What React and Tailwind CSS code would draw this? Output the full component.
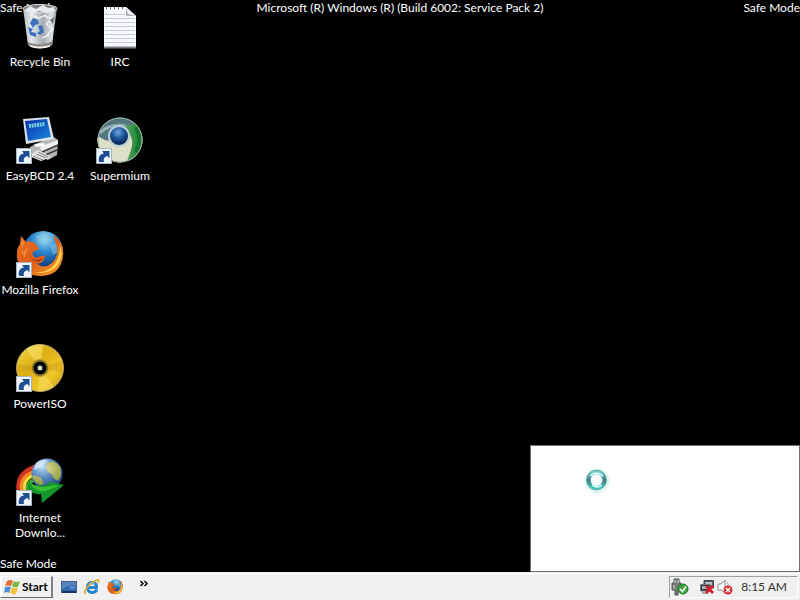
import React from "react";

function ShortcutArrow() {
  return (
    <g>
      <rect x="0.5" y="32.5" width="15" height="15" fill="#f1f5fb" stroke="#a9b4c2" />
      <path d="M3 46C2 41 4 38 8 37.500L6 35H13.500V42.500L11.300 40C8 41 7 43 8 46Z" fill="#1f4f93" />
    </g>
  );
}

function RecycleBin() {
  return (
    <svg viewBox="0 -2 48 48" className="size-12 overflow-visible" aria-hidden="true">
      <defs>
        <linearGradient id="bin" x1="0" x2="1">
          <stop offset="0" stopColor="#b9bec2" />
          <stop offset=".25" stopColor="#e3e7ea" />
          <stop offset=".6" stopColor="#a4abb0" />
          <stop offset=".85" stopColor="#dfe3e6" />
          <stop offset="1" stopColor="#858c91" />
        </linearGradient>
      </defs>
      <path d="M7 4L12 41Q23 48 36 41L41 4Z" fill="url(#bin)" />
      <path d="M12 38Q24 43 37 37L36 41Q24 48 12 41Z" fill="#8f8c84" />
      <path d="M14 42Q24 45 34 42" fill="none" stroke="#f4f4ee" strokeWidth="1.500" />
      <ellipse cx="24" cy="4.500" rx="17" ry="4" fill="#777d80" stroke="#d9dcde" />
      <path d="M9 6L14 2L20 5L27 1L32 4L38 3L39 7L31 9L23 7L16 10Z" fill="#e8eaec" />
      <path d="M29 12L36 15L30 20L37 25L31 31M15 11L23 14L30 11M26 34L33 31" fill="none" stroke="#fafafa" strokeWidth="1.500" opacity=".8" />
      <path d="M34 16L38 13L37 20Z" fill="#63696d" />
      <path d="M14 19L17 14L22 16L23 20L19 21L17 24ZM22 22L26 21L28 28L24 31L21 29L24 27ZM12 23L17 25L15 28L20 29L20 33L14 31Z" fill="#3a70c0" />
    </svg>
  );
}

function Notepad() {
  const lines = [11, 15, 19, 23, 27, 31, 35, 39];
  return (
    <svg viewBox="0 -1 48 48" className="size-12 overflow-visible" aria-hidden="true">
      <path d="M8 4H30L40 13V45H8Z" fill="#f7f8fb" />
      {lines.map((y) => (
        <path key={y} d={`M9 ${y}.5H${y < 14 ? 29 : 39}`} stroke="#c6cbe0" />
      ))}
      <path d="M30 4V13H40Z" fill="#aeb3bb" />
      <path d="M30 4L40 13L32 11Z" fill="#eef0f3" />
      <path d="M10 5H30" stroke="#666b72" strokeWidth="2.500" strokeDasharray="1 3" />
      <path d="M8 44.500H40" stroke="#777c84" strokeWidth="2" />
    </svg>
  );
}

function EasyBcd() {
  return (
    <svg viewBox="0 0 48 48" className="size-12 overflow-visible" aria-hidden="true">
      <defs>
        <linearGradient id="screen" x1="0" y1="0" x2="1" y2="1">
          <stop offset="0" stopColor="#0b2eaa" />
          <stop offset="1" stopColor="#1b8be0" />
        </linearGradient>
      </defs>
      <path d="M14 31L36 20L42 24L41 39L32 44L14 38Z" fill="#b7b9b7" />
      <path d="M24 31L42 24V29L26 36Z" fill="#efefec" />
      <path d="M26 36L42 29M27 40L41 34" stroke="#3b3d3d" strokeWidth="1.500" />
      <path d="M13 40L22 34L35 41L25 45Z" fill="#e9e9e6" />
      <path d="M17 40L27 44M20 38L30 42M22 36L32 41" stroke="#777" strokeWidth="1" />
      <path d="M7 3L33 1L38 23L10 28Z" fill="#dce2ea" />
      <path d="M9 5L31 3L35 21L12 25Z" fill="url(#screen)" />
      <path d="M13 10L29 8" stroke="#77cddd" strokeWidth="4" strokeDasharray="2 .7" />
      <path d="M18 28L28 27L29 30L20 31Z" fill="#fff" />
      <ShortcutArrow />
    </svg>
  );
}

function Supermium() {
  return (
    <svg viewBox="0 0 48 48" className="size-12 overflow-visible" aria-hidden="true">
      <defs>
        <radialGradient id="core" cx=".45" cy=".3" r=".7">
          <stop offset="0" stopColor="#6da5dc" />
          <stop offset=".5" stopColor="#1d559c" />
          <stop offset="1" stopColor="#061c4b" />
        </radialGradient>
        <linearGradient id="green" x1="0" x2="1">
          <stop offset="0" stopColor="#66a771" />
          <stop offset=".65" stopColor="#218b36" />
          <stop offset="1" stopColor="#6fb875" />
        </linearGradient>
        <clipPath id="ball">
          <circle cx="24" cy="24" r="22.500" />
        </clipPath>
      </defs>
      <g clipPath="url(#ball)">
        <path d="M0 0H48V48H0Z" fill="#dfe0c9" />
        <path d="M0 0H48V16H24Q14 16 12 26L0 19Z" fill="#55777f" />
        <path d="M4 17Q14 7 30 10" fill="none" stroke="#93b1b6" strokeWidth="3" />
        <path d="M28 9Q38 11 42 3L48 8V48H30L35 34Q39 22 30 14Z" fill="url(#green)" />
        <path d="M40 11Q47 23 40 36" fill="none" stroke="#14752c" strokeWidth="4" />
        <path d="M0 21Q7 24 13 25Q17 36 31 33L25 48H0Z" fill="#dfe0c9" />
      </g>
      <circle cx="24" cy="24" r="22" fill="none" stroke="#99b0a5" />
      <circle cx="23" cy="20" r="11" fill="#b9cfd8" />
      <circle cx="23" cy="20" r="9" fill="url(#core)" />
      <ShortcutArrow />
    </svg>
  );
}

function FirefoxArt({ id }) {
  return (
    <g>
      <defs>
        <radialGradient id={`${id}-globe`} cx=".55" cy=".2" r=".8">
          <stop offset="0" stopColor="#a4e0f5" />
          <stop offset=".4" stopColor="#2c89ce" />
          <stop offset="1" stopColor="#0a2668" />
        </radialGradient>
        <linearGradient id={`${id}-fox`} x1="0" y1="0" x2="1" y2="1">
          <stop offset="0" stopColor="#e67024" />
          <stop offset=".5" stopColor="#df5c17" />
          <stop offset="1" stopColor="#f5a62c" />
        </linearGradient>
      </defs>
      <circle cx="27" cy="21" r="20" fill={`url(#${id}-globe)`} />
      <path d="M20 6L30 3L34 9L28 14L22 11ZM34 15L40 13L43 22L37 25Z" fill="#83c5df" opacity=".55" />
      <path d="M37 5Q49 13 47 26Q45 45 25 46Q5 46 1 28Q0 19 4 14L5 6L10 12Q15 10 20 14L23 19L17 22Q15 26 21 28Q26 24 29 27Q26 35 20 33Q28 40 36 33Q43 26 41 17Q39 11 37 5Z" fill={`url(#${id}-fox)`} />
      <path d="M5 9L9 13Q5 17 6 25Q8 19 14 17Q9 20 9 28Q6 23 5 9Z" fill="#f28a36" />
      <path d="M44 15Q49 28 39 38Q29 45 18 42Q31 44 39 34Q44 27 44 15Z" fill="#ffd54f" />
      <path d="M14 24Q14 29 20 30L28 28L23 32Q16 32 14 24Z" fill="#ae3d11" />
    </g>
  );
}

function Firefox() {
  return (
    <svg viewBox="0 0 48 48" className="size-12 overflow-visible" aria-hidden="true">
      <FirefoxArt id="desk" />
      <ShortcutArrow />
    </svg>
  );
}

function PowerIso() {
  return (
    <svg viewBox="0 0 48 48" className="size-12 overflow-visible" aria-hidden="true">
      <defs>
        <linearGradient id="gold" x1="0" y1="0" x2="1" y2="1">
          <stop offset="0" stopColor="#f5d94f" />
          <stop offset=".4" stopColor="#dcae12" />
          <stop offset=".7" stopColor="#efc729" />
          <stop offset="1" stopColor="#c7960c" />
        </linearGradient>
      </defs>
      <circle cx="24" cy="24" r="23.500" fill="url(#gold)" stroke="#b8a266" />
      <path d="M24 24L10 5Q18 -1 27 1Z" fill="#fff083" opacity=".45" />
      <path d="M24 24L38 43Q31 48 22 47Z" fill="#fff083" opacity=".35" />
      <path d="M24 24L1 20V28ZM24 24L46 17L47 29Z" fill="#bd8b0d" opacity=".3" />
      <circle cx="24" cy="24" r="8.500" fill="#8a742c" stroke="#c0a13b" />
      <circle cx="24" cy="24" r="6.500" fill="#000" />
      <circle cx="24" cy="24" r="2.500" fill="#d9d9d9" />
      <ShortcutArrow />
    </svg>
  );
}

function DownloadManager() {
  return (
    <svg viewBox="0 0 48 48" className="size-12 overflow-visible" aria-hidden="true">
      <defs>
        <radialGradient id="earth" cx=".35" cy=".25" r=".8">
          <stop offset="0" stopColor="#c2e2fb" />
          <stop offset=".4" stopColor="#6894c5" />
          <stop offset="1" stopColor="#173f87" />
        </radialGradient>
        <radialGradient id="land" cx=".4" cy=".3" r=".7">
          <stop offset="0" stopColor="#e3dda2" />
          <stop offset="1" stopColor="#8f9f3a" />
        </radialGradient>
      </defs>
      <path d="M3 32Q1 15 20 9" fill="none" stroke="#d33620" strokeWidth="5" />
      <path d="M6 32Q4 17 22 13" fill="none" stroke="#f08b25" strokeWidth="4" />
      <path d="M9 33Q6 19 23 16" fill="none" stroke="#f1df40" strokeWidth="3" />
      <path d="M12 35Q9 22 25 20" fill="none" stroke="#46a73a" strokeWidth="4" />
      <circle cx="31" cy="16" r="15.500" fill="url(#earth)" />
      <path d="M31 5Q38 1 44 9Q47 17 42 23Q36 20 36 16Q28 14 31 5ZM18 17L25 20L28 26L24 27Q18 24 16 19Z" fill="url(#land)" />
      <path d="M20 5Q26 0 32 3L25 9L18 12Z" fill="#dceefa" opacity=".7" />
      <path d="M13 24Q21 30 34 26L31 23L48 27L26 45L25 36Q17 37 11 31Z" fill="#15962b" />
      <path d="M14 25Q24 32 38 27L43 28L29 33Q19 35 14 25Z" fill="#38bd34" />
      <ShortcutArrow />
    </svg>
  );
}

const columns = [
  [
    { label: "Recycle Bin", Icon: RecycleBin },
    { label: "EasyBCD 2.4", Icon: EasyBcd },
    { label: "Mozilla Firefox", Icon: Firefox },
    { label: "PowerISO", Icon: PowerIso },
    { label: "Internet Downlo...", Icon: DownloadManager },
  ],
  [
    { label: "IRC", Icon: Notepad },
    { label: "Supermium", Icon: Supermium },
  ],
];

function DesktopIcon({ label, Icon }) {
  return (
    <button type="button" className="flex h-[114px] w-20 flex-col items-center gap-1 pt-0.5">
      <Icon />
      <span className="leading-[15px]">{label}</span>
    </button>
  );
}

function BusyWindow() {
  return (
    <section aria-label="Loading" className="absolute right-0 bottom-0 h-[127px] w-[270px] border border-[#707070] bg-white pt-[22px] pl-[53px]">
      <svg viewBox="0 0 26 26" className="size-[26px]" aria-hidden="true">
        <defs>
          <linearGradient id="ring" x1="0" y1="0" x2="0" y2="1">
            <stop offset="0" stopColor="#75c9c3" />
            <stop offset=".5" stopColor="#397f83" />
            <stop offset="1" stopColor="#42c4b8" />
          </linearGradient>
        </defs>
        <circle cx="13" cy="13" r="11" fill="none" stroke="#dff7f3" strokeWidth="3" />
        <circle cx="12.500" cy="12" r="8" fill="#f7fbff" stroke="url(#ring)" strokeWidth="4" />
        <path d="M6 8Q12 2 19 8M8 17Q13 21 18 17" fill="none" stroke="#d5fffa" strokeWidth="1.500" />
        <circle cx="12.500" cy="12" r="10" fill="none" stroke="#4c9c9b" strokeWidth=".7" />
      </svg>
    </section>
  );
}

function WindowsFlag() {
  return (
    <svg viewBox="0 0 16 16" className="size-4" aria-hidden="true">
      <path d="M3 2Q6 0 9 2L7 7Q4 6 1 7Z" fill="#e66b36" />
      <path d="M10 2Q13 4 16 2L14 8Q11 9 8 7Z" fill="#78b943" />
      <path d="M1 8Q4 7 7 8L5 14Q2 12 0 14Z" fill="#4a8fd3" />
      <path d="M8 8Q11 10 14 9L12 15Q9 16 6 14Z" fill="#f3c53b" />
    </svg>
  );
}

function ShowDesktop() {
  return (
    <svg viewBox="0 0 16 16" className="size-4" aria-hidden="true">
      <rect x=".5" y="2.500" width="15" height="11" fill="#3269b3" stroke="#49617f" />
      <path d="M1 3H15V6Q8 6 1 10Z" fill="#5485c0" />
      <path d="M1 13H15" stroke="#1b365d" strokeWidth="2" />
      <path d="M9 7H14V10H9Z" fill="#4e8bd1" />
    </svg>
  );
}

function Explorer() {
  return (
    <svg viewBox="0 0 16 16" className="size-4" aria-hidden="true">
      <path d="M13 10.500Q11 14 7.500 13.500Q3 12.500 3.500 8Q4 3.500 8.500 3.500Q13 4 12.500 8.500H5" fill="none" stroke="#2384cf" strokeWidth="3" />
      <path d="M5 5Q8 2 11 5" fill="none" stroke="#80c7ee" />
      <path d="M2 14Q-1 15 2 10Q7 3 13 1Q16 0 14 4" fill="none" stroke="#e4ae2c" strokeWidth="1.500" />
    </svg>
  );
}

function QuickFirefox() {
  return (
    <svg viewBox="0 0 48 48" className="size-4" aria-hidden="true">
      <FirefoxArt id="quick" />
    </svg>
  );
}

function SafelyRemove() {
  return (
    <svg viewBox="0 0 18 18" className="size-[18px]" aria-hidden="true">
      <path d="M3 1H8V5H10V12H7V17H4V12H1V5H3Z" fill="#777c7a" stroke="#4e5450" />
      <path d="M4 2V5M7 2V5M3 7V11" stroke="#d9ddda" />
      <circle cx="12" cy="11" r="5" fill="#3da53f" stroke="#217a28" />
      <path d="M9 11L11.500 13.500L15 8.500" fill="none" stroke="#fff" strokeWidth="1.700" />
    </svg>
  );
}

function NetworkOff() {
  return (
    <svg viewBox="0 0 16 16" className="size-4" aria-hidden="true">
      <path d="M5 1.500H14.500V9H5Z" fill="#5c6368" stroke="#41474b" />
      <path d="M6.500 3H13V6H6.500Z" fill="#b9c0c5" />
      <path d="M1.500 5.500H11V12H1.500Z" fill="#30373d" stroke="#777c80" />
      <path d="M3 7H8V10H3Z" fill="#aab4bb" />
      <path d="M3 14H9" stroke="#8c979e" strokeWidth="1.500" />
      <path d="M7 7L14 14M14 7L7 14" stroke="#d71e2a" strokeWidth="2.800" />
    </svg>
  );
}

function VolumeOff() {
  return (
    <svg viewBox="0 0 16 16" className="size-4" aria-hidden="true">
      <path d="M1 5H4L8 1V14L4 11H1Z" fill="#f8f8f8" stroke="#8d9092" />
      <path d="M10 3Q12 5 11 7" fill="none" stroke="#aaa" />
      <circle cx="11" cy="11" r="4.500" fill="#da3039" />
      <path d="M9 9L13 13M13 9L9 13" stroke="#fff" strokeWidth="1.500" />
    </svg>
  );
}

function Taskbar() {
  return (
    <footer className="flex h-7 shrink-0 items-center border-t border-[#e4e4e4] bg-[#f0f0f0] text-black shadow-[inset_0_1px_0_#ffffff]">
      <button type="button" className="flex h-[22px] w-[53px] items-center gap-0.5 border-y border-r-2 border-l-2 border-t-white border-r-[#808080] border-b-[#696969] border-l-white pl-0.5 font-bold">
        <WindowsFlag />
        Start
      </button>
      <nav aria-label="Quick launch" className="ml-2 flex items-center gap-[7px]">
        <button type="button" aria-label="Show desktop"><ShowDesktop /></button>
        <button type="button" aria-label="Internet Explorer"><Explorer /></button>
        <button type="button" aria-label="Mozilla Firefox"><QuickFirefox /></button>
        <button type="button" aria-label="More programs" className="ml-2.5">
          <svg viewBox="0 0 8 16" className="h-4 w-2" aria-hidden="true">
            <path d="M.5 2L3 4.500L.5 7M4.500 2L7 4.500L4.500 7" fill="none" stroke="#000" strokeWidth="1.500" />
          </svg>
        </button>
      </nav>
      <div className="mr-0.5 ml-auto flex h-[22px] w-[129px] items-center justify-between border border-t-[#a0a0a0] border-r-white border-b-white border-l-[#a0a0a0] pr-2.5 pl-px">
        <span className="flex items-center">
          <SafelyRemove />
          <span className="ml-2.5 flex gap-0.5">
            <NetworkOff />
            <VolumeOff />
          </span>
        </span>
        <time className="text-[#333]">8:15 AM</time>
      </div>
    </footer>
  );
}

export default function App() {
  return (
    <div className="flex h-screen flex-col overflow-hidden bg-black font-[Lato,'Open_Sans',sans-serif] text-[12px] leading-4 text-white">
      <main className="relative min-h-0 flex-1">
        <div className="absolute inset-x-0 top-0 flex justify-between">
          <span>Safe Mode</span>
          <span>Microsoft (R) Windows (R) (Build 6002: Service Pack 2)</span>
          <span>Safe Mode</span>
        </div>
        <div className="absolute bottom-0 left-0">Safe Mode</div>
        <div className="relative flex">
          {columns.map((items, index) => (
            <div key={index} className="flex flex-col">
              {items.map((item) => (
                <DesktopIcon key={item.label} {...item} />
              ))}
            </div>
          ))}
        </div>
        <BusyWindow />
      </main>
      <Taskbar />
    </div>
  );
}
